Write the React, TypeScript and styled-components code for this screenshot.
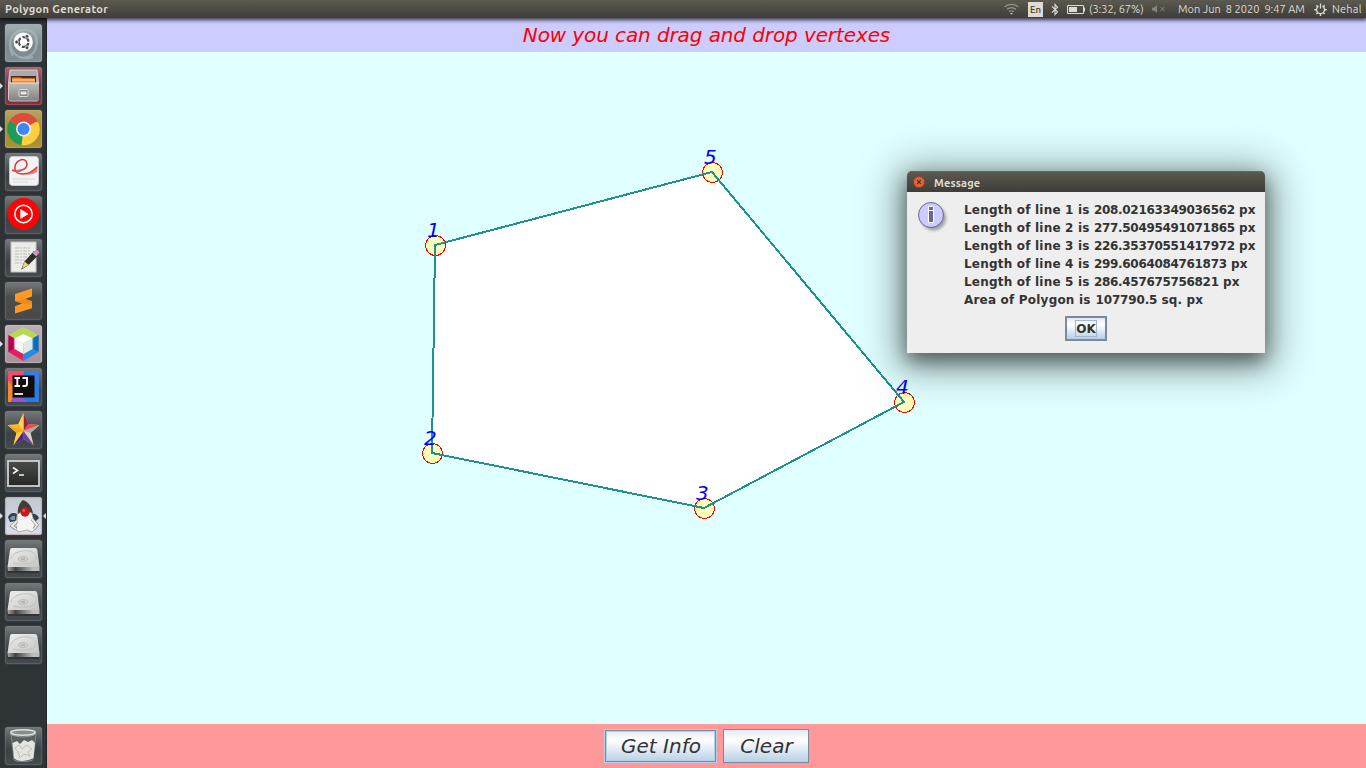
import React from 'react';
import styled, { createGlobalStyle, css } from 'styled-components';

const GlobalStyle = createGlobalStyle`
  * { box-sizing: border-box; }
  html, body { margin: 0; padding: 0; }
  body { width: 1366px; height: 768px; overflow: hidden; }
`;

const Desktop = styled.div`
  display: flex;
  flex-direction: column;
  width: 1366px;
  height: 768px;
  font-family: 'DejaVu Sans', sans-serif;
`;

const TopBar = styled.header`
  display: flex;
  align-items: center;
  justify-content: space-between;
  flex: none;
  height: 18px;
  padding: 0 4px 0 5px;
  background: linear-gradient(#5c5a50, #45443e 75%, #3f3e39);
  box-shadow: 0 1px 4px 1px rgba(0, 0, 0, 0.75);
  color: #dfdbd2;
  font-family: Ubuntu, 'Noto Sans', sans-serif;
  font-size: 11px;
  position: relative;
  z-index: 2;
`;

const AppTitle = styled.span`
  font-weight: 700;
  letter-spacing: 0.34px;
  line-height: 18px;
`;

const Indicators = styled.div`
  display: flex;
  align-items: center;
  height: 18px;
`;

const Indicator = styled.span<{ $width: number; $gap?: number; $spacing?: number }>`
  display: flex;
  flex: none;
  align-items: center;
  width: ${(p) => p.$width}px;
  margin-right: ${(p) => p.$gap ?? 0}px;
  letter-spacing: ${(p) => p.$spacing ?? 0}px;
  line-height: 18px;
  white-space: pre;
`;

const Language = styled.span`
  width: 15px;
  height: 15px;
  margin-right: 8px;
  background: #dfdbd2;
  color: #3c3b37;
  font-size: 9.5px;
  font-weight: 500;
  line-height: 16px;
  text-align: center;
`;

const Workspace = styled.div`
  display: flex;
  flex: 1;
  min-height: 0;
`;

const Launcher = styled.nav`
  display: flex;
  flex-direction: column;
  justify-content: space-between;
  width: 47px;
  padding: 6px 0 3px;
  background: #2e3436;
  border-right: 1px solid #202527;
`;

const LauncherGroup = styled.div`
  display: flex;
  flex-direction: column;
  gap: 5px;
`;

const LauncherRow = styled.div`
  display: flex;
  align-items: center;
  height: 38px;
`;

const Marker = styled.span<{ $side: 'left' | 'right'; $on?: boolean }>`
  width: 0;
  height: 0;
  border: 3px solid transparent;
  ${(p) =>
    p.$side === 'left'
      ? css`
          border-left-color: ${p.$on ? '#dcdcdc' : 'transparent'};
          border-right-width: 0;
          margin-right: 2px;
        `
      : css`
          border-right-color: ${p.$on ? '#dcdcdc' : 'transparent'};
          border-left-width: 0;
          margin-left: 1px;
        `}
`;

const Tile = styled.div<{ $bg: string; $edge: string }>`
  width: 37px;
  height: 38px;
  border-radius: 3px;
  background: ${(p) => p.$bg};
  box-shadow: inset 0 0 1px 1px ${(p) => p.$edge}, 0 0 1px 1px rgba(80, 88, 92, 0.3);
  svg { display: block; }
`;

const AppWindow = styled.main`
  display: flex;
  flex: 1;
  flex-direction: column;
`;

const Notice = styled.div`
  height: 34px;
  background: #ccccff;
  color: #ff0000;
  font-size: 20px;
  font-style: italic;
  letter-spacing: -0.1px;
  line-height: 34px;
  text-align: center;
`;

const Drawing = styled.svg`
  display: block;
  flex: none;
  width: 1319px;
  height: 672px;
  background: #e0ffff;
`;

const ActionBar = styled.footer`
  display: flex;
  align-items: center;
  justify-content: center;
  gap: 6px;
  height: 44px;
  background: #ff9999;
`;

const metalFill = 'linear-gradient(#dfe9f2, #ffffff 30%, #fbfcfe 36%, #b8cfe5)';

const ActionButton = styled.button<{ $width: number; $active?: boolean }>`
  width: ${(p) => p.$width}px;
  height: 34px;
  padding: 0 0 0 1px;
  border: 1px solid ${(p) => (p.$active ? '#b8cfe5' : '#7a8a99')};
  border-radius: 0;
  background: ${metalFill};
  box-shadow: ${(p) => (p.$active ? 'inset 0 0 0 1px #7a8a99, inset 0 0 0 2px #b8cfe5' : 'none')};
  color: #333333;
  font: italic 20px/32px 'DejaVu Sans', sans-serif;
`;

const Dialog = styled.section`
  position: absolute;
  left: 907px;
  top: 171px;
  width: 358px;
  height: 182px;
  border-radius: 5px 5px 0 0;
  background: #eeeeee;
  box-shadow: 0 8px 20px 0 rgba(0, 0, 0, 0.5), 0 6px 42px 10px rgba(0, 0, 0, 0.36);
  z-index: 3;
`;

const DialogTitle = styled.div`
  display: flex;
  align-items: center;
  height: 21px;
  padding-left: 6px;
  gap: 9px;
  border-radius: 5px 5px 0 0;
  background: linear-gradient(#5c5a50, #3e3d38);
  box-shadow: inset 0 1px 0 #69675d;
  color: #dfdbd2;
  font: 700 11px/21px Ubuntu, 'Noto Sans', sans-serif;
  letter-spacing: 0.15px;
  svg { flex: none; }
`;

const DialogName = styled.span`
  padding-top: 3px;
`;

const DialogBody = styled.div`
  display: flex;
  padding: 8px 0 0 9px;
  svg { flex: none; margin-right: 14px; }
`;

const MessageLines = styled.div`
  padding-top: 1px;
  color: #333333;
  font: 700 12px/18px 'DejaVu Sans', sans-serif;
`;

const MessageLine = styled.div`
  display: flex;
  height: 18px;
  white-space: pre;
`;

const Caption = styled.span<{ $width: number; $spacing: number }>`
  width: ${(p) => p.$width}px;
  letter-spacing: ${(p) => p.$spacing}px;
`;

const Measure = styled.span<{ $spacing: number }>`
  letter-spacing: ${(p) => p.$spacing}px;
`;

const DialogActions = styled.div`
  display: flex;
  justify-content: center;
  padding-top: 7px;
`;

const OkButton = styled.button`
  display: flex;
  align-items: center;
  justify-content: center;
  width: 42px;
  height: 25px;
  padding: 0;
  border: 2px solid #7a8a99;
  border-radius: 0;
  background: ${metalFill};
  color: #333333;
  font: 700 12px/17px 'DejaVu Sans', sans-serif;
`;

const FocusBox = styled.span`
  width: 22px;
  height: 17px;
  border: 1px solid #a3b8cc;
  text-align: center;
`;

const vertices = [
  { x: 435, y: 245 },
  { x: 432, y: 453 },
  { x: 704, y: 508 },
  { x: 904, y: 402 },
  { x: 712, y: 172 },
];

const outline = vertices.map((v) => `${v.x},${v.y}`).join(' ');

const measurements = [
  ['Length of line 1 is ', '208.02163349036562', ' px'],
  ['Length of line 2 is ', '277.50495491071865', ' px'],
  ['Length of line 3 is ', '226.35370551417972', ' px'],
  ['Length of line 4 is ', '299.6064084761873', ' px'],
  ['Length of line 5 is ', '286.457675756821', ' px'],
  ['Area of Polygon is ', '107790.5', ' sq. px'],
];

const Glyph = ({ children }: { children: React.ReactNode }) => (
  <svg width="37" height="38" viewBox="0 0 37 38">{children}</svg>
);

const DashIcon = () => (
  <Glyph>
    <g fill="none" stroke="#b5c2c6" strokeWidth="2" opacity=".55">
      <path d="M8 32C0 18 8 6 20 6c10 0 15 9 10 19" />
      <path d="M28 33C12 38 3 26 6 14" />
      <path d="M14 33c12 3 20-7 17-19" />
    </g>
    <circle cx="18.2" cy="18" r="9.6" fill="#fff" />
    <circle cx="18.6" cy="18" r="4.9" fill="none" stroke="#474d4f" strokeWidth="2.3" strokeDasharray="8.2 2" strokeDashoffset="-1" />
    <g fill="#474d4f" stroke="#fff" strokeWidth=".7">
      <circle cx="11.7" cy="18" r="1.9" /><circle cx="22" cy="12.3" r="1.9" /><circle cx="22" cy="23.7" r="1.9" />
    </g>
  </Glyph>
);

const FilesIcon = () => (
  <Glyph>
    <defs><linearGradient id="cab" x2="0" y2="1"><stop stopColor="#bcbcba" /><stop offset="1" stopColor="#838383" /></linearGradient></defs>
    <path d="M5 3h27l1.5 12v17q0 2-2 2h-26q-2 0-2-2V15z" fill="#aaaaa7" stroke="#dfdddc" strokeWidth=".8" />
    <path d="M6 9h25v7H6z" fill="#4b2b20" />
    <path d="M7 10.5h9l1 .7h13V16H7z" fill="#f48934" /><path d="M7 13h23" stroke="#ffd0a0" />
    <rect x="4" y="16" width="30" height="17.5" rx="1" fill="url(#cab)" />
    <path d="M4 16h30" stroke="#e3e3e1" />
    <rect x="14" y="22.5" width="9" height="7" rx="1" fill="#888" stroke="#d8d8d8" />
    <path d="M16 27v-2h5v2z" fill="#ddd" stroke="#fff" strokeWidth=".7" />
  </Glyph>
);

const ChromeIcon = () => (
  <Glyph>
    <path d="M18.5 19 4.6 11A16 16 0 0 1 32.4 11z" fill="#dc4b3e" />
    <path d="M18.5 19V35A16 16 0 0 1 4.6 11z" fill="#199d58" />
    <path d="M18.5 19 32.4 11A16 16 0 0 1 16.5 35z" fill="#ffcf3f" />
    <path d="M18.5 11.6H32.7" stroke="#dc4b3e" />
    <circle cx="18.5" cy="19" r="7.5" fill="#eef2f4" />
    <circle cx="18.5" cy="19" r="6" fill="#4285f4" />
  </Glyph>
);

const DocumentIcon = () => (
  <Glyph>
    <rect x="4.5" y="3.5" width="29" height="29" rx="3" fill="#f3f3f3" stroke="#c9c9c9" />
    <path d="M7 17c7 3 18-1 14-9-4-4-12 1-11 8 0 6 13 8 22-2" fill="none" stroke="#d73839" strokeWidth="1.5" />
    <path d="M7 18q8 3 14-3M19 21q8-1 14-8l-1 6q-6 4-13 2" fill="#e05b5d" opacity=".75" />
    <path d="M8 26h22M8 29h15" stroke="#d5d5d5" />
  </Glyph>
);

const MusicIcon = () => (
  <Glyph>
    <circle cx="18.5" cy="18" r="16" fill="#f90505" />
    <circle cx="18.5" cy="18" r="8.7" fill="none" stroke="#fff" strokeWidth="1.5" />
    <path d="m15.3 13 8.3 5-8.3 5z" fill="#fff" />
  </Glyph>
);

const EditorIcon = () => (
  <Glyph>
    <rect x="6" y="3" width="25" height="30" fill="#ecece8" stroke="#c4c4c0" />
    <path d="M10 9h16M10 12h15M10 15h16M10 18h12M10 21h10M10 24h7" stroke="#bdbdb9" strokeDasharray="4 1 2 1" />
    <path d="M17.5 29 20 23 29 13l3.3 3.2-10 10z" fill="#302f29" stroke="#302f29" strokeWidth="1.4" />
    <path d="m17 29.5 2.6-7 4.2 3.6z" fill="#e7d873" />
    <path d="m28 13.5 3.7 3.3 2.5-2.8q0-3-3-3z" fill="#cf8bbf" />
    <path d="m28 13.5 3.7 3.3" stroke="#bbb" strokeWidth="1.3" />
  </Glyph>
);

const SublimeIcon = () => (
  <Glyph>
    <path d="M27 6.5v8L20 17l7 2.3v7L10 31.5v-7.3l7-2.6-7-2.6v-7z" fill="#ff9825" />
    <path d="m10 19 10-2 7 2.3v3.2l-10-.9z" fill="#ec8a1e" />
  </Glyph>
);

const CubeIcon = () => (
  <Glyph>
    <path d="m18.5 2 15 8-7 4-8-4-8 4-7-4z" fill="#b7d958" />
    <path d="m3.5 10 6.5 4v10l8.5 5v7L3.5 27z" fill="#e51f64" />
    <path d="m33.5 10-6.5 4v10l-8.5 5v7l15-9z" fill="#268ce0" />
    <path d="m3.5 10 5 3v11l-5 3z" fill="#ae064c" /><path d="m33.5 10-5 3v11l5 3z" fill="#136bb3" />
    <path d="m18.5 9 9 4.5-9 5-9-5z" fill="#fff" />
    <path d="M9.5 13.5v10.5l9 5V18.5z" fill="#f5f7f3" /><path d="M27.5 13.5v10.5l-9 5V18.5z" fill="#dfe9e6" />
  </Glyph>
);

const IdeIcon = () => (
  <Glyph>
    <rect x="3" y="3" width="31" height="31" fill="#287bdf" />
    <path d="M3 3h17l-8 17-9 8z" fill="#f64c6c" /><path d="m3 13 8 8-5 13H3z" fill="#f58a2a" />
    <path d="m11 23 11 11H6z" fill="#9455d3" /><path d="m20 3 14 14V3z" fill="#367bea" />
    <rect x="7.5" y="7.5" width="22" height="22" fill="#100c0e" />
    <path d="M9.5 10h5.5m-2.7 0v8m-2.8 0h5.5M17.5 10h4.5v6q0 2-2 2h-2.5" fill="none" stroke="#fff" strokeWidth="1.9" />
    <path d="M9.5 26h8.5" stroke="#fff" strokeWidth="1.7" />
  </Glyph>
);

const StarIcon = () => (
  <Glyph>
    <path d="m18.5 2 5 11 11 1-9 8 3 12-10-6-10 6 3-12-9-8 11-1z" fill="#f8ba29" />
    <path d="m18.5 2 5 11-5 7z" fill="#9b243d" /><path d="m23.5 13 11 1-16 6z" fill="#e5486b" />
    <path d="m34.5 14-9 8-7-2z" fill="#aaa" /><path d="m25.5 22 3 12-10-14z" fill="#d0d0d0" />
    <path d="m28.5 34-10-6v-8z" fill="#6743a5" /><path d="m18.5 28-10 6 10-14z" fill="#4a2199" />
    <path d="m18.5 20-7 2-3 12z" fill="#ffce38" /><path d="m18.5 20-16-6 9 8z" fill="#eda822" />
    <path d="m18.5 2-5 11 5 7z" fill="#ffd45d" />
  </Glyph>
);

const TerminalIcon = () => (
  <Glyph>
    <defs><linearGradient id="term" x2="0" y2="1"><stop stopColor="#4b4c49" /><stop offset="1" stopColor="#252724" /></linearGradient></defs>
    <rect x="3" y="7" width="31" height="25" fill="url(#term)" stroke="#d0d0cf" strokeWidth="1.8" />
    <path d="m8 13.5 4.5 3-4.5 3M14 21h5" fill="none" stroke="#f0f0ef" strokeWidth="1.6" />
  </Glyph>
);

const DukeIcon = () => (
  <Glyph>
    <path d="M3 20q3-6 9-3l-1 7-6 1zM24 17q7-2 10 4l-4 4-6-3z" fill="#32414a" />
    <path d="M5 21q3-3 5-2v4H6z" fill="#779aaa" />
    <path d="M18 3q8 4 9 14l4 14-4 4-5-2-9 2q-3-3-1-11 0-14 6-21z" fill="#f4f4f1" stroke="#777" strokeWidth=".5" />
    <path d="M18 3q8 3 10 13l-5-1q-5-3-10 2-1-9 5-14z" fill="#3f3f3f" />
    <circle cx="20" cy="15" r="4.7" fill="#c9191d" /><circle cx="18.8" cy="13.6" r="1.5" fill="#ee5555" />
    <path d="m12 24-5 5 4 3M27 22l5 6-3 4" fill="none" stroke="#777" strokeWidth="3" />
    <path d="m12 24-5 5 4 3M27 22l5 6-3 4" fill="none" stroke="#ededeb" strokeWidth="2" />
  </Glyph>
);

const DiskIcon = () => (
  <Glyph>
    <defs>
      <linearGradient id="plate" x2="1" y2="1"><stop stopColor="#efefee" /><stop offset="1" stopColor="#c4c4c2" /></linearGradient>
      <linearGradient id="front"><stop stopColor="#aaa" /><stop offset=".25" stopColor="#444" /><stop offset=".8" stopColor="#bdbdbd" /></linearGradient>
    </defs>
    <path d="M2 27h32v6H3z" fill="#222" opacity=".5" />
    <path d="M7 8h23q2 0 2.3 2L34.5 27H2.5L5 10q.2-2 2-2z" fill="url(#plate)" />
    <path d="M2.5 27h32v4H3z" fill="url(#front)" />
    <path d="M6 19C7 10 30 7 31 17c1 8-16 8-23 6" fill="none" stroke="#c0c0be" />
    <ellipse cx="18" cy="19" rx="4.5" ry="2.3" fill="#d3d3d1" stroke="#b0b0ae" strokeWidth=".8" /><path d="M16 19h4" stroke="#999" />
  </Glyph>
);

const TrashIcon = () => (
  <Glyph>
    <path d="m6 7 3 25.5q0 2 9 2t10-2L31 7z" fill="#596162" stroke="#8c9391" strokeWidth=".8" />
    <path d="m9 31-1.5-15L12 14l3 3 4-4 4 2 4-2 3 3-1.5 15q-5 3-11 3T9 31z" fill="#e3e4df" />
    <path d="m10 21 4-3 3 4 5-4 5 4-4 3 2 4-6-2-4 4-2-6z" stroke="#bcbfba" fill="none" />
    <ellipse cx="18" cy="5.5" rx="12.3" ry="2.7" fill="#858e8d" stroke="#dde1df" strokeWidth="1.6" />
    <path d="M7 8q11 4 22 0" fill="none" stroke="#a4abaa" strokeWidth=".8" />
  </Glyph>
);

const darkTile = 'linear-gradient(#74797c, #505558 35%, #3b4144 60%, #444a4d)';
const darkEdge = 'rgba(125,132,135,.4)';

interface LaunchItem {
  icon: React.ReactNode;
  bg?: string;
  edge?: string;
  running?: boolean;
  focused?: boolean;
}

const launchers: LaunchItem[] = [
  { icon: <DashIcon />, bg: 'linear-gradient(#a5b0b3, #7b898e 60%, #819096)', edge: 'rgba(165,175,179,.6)' },
  { icon: <FilesIcon />, bg: 'linear-gradient(#ad6976, #7b2f3e 45%, #812f40)', edge: 'rgba(179,103,116,.6)', running: true },
  { icon: <ChromeIcon />, bg: 'linear-gradient(#b8a76b, #a58a30 45%, #ac9336)', edge: 'rgba(194,173,93,.6)', running: true },
  { icon: <DocumentIcon /> },
  { icon: <MusicIcon /> },
  { icon: <EditorIcon /> },
  { icon: <SublimeIcon />, bg: 'linear-gradient(#77797b, #4c4c4c 40%, #494949)' },
  { icon: <CubeIcon />, bg: 'linear-gradient(#bdb0b5, #a79198)', edge: 'rgba(212,194,201,.6)', running: true },
  { icon: <IdeIcon /> },
  { icon: <StarIcon /> },
  { icon: <TerminalIcon /> },
  { icon: <DukeIcon />, bg: 'linear-gradient(#c2c6cf, #d8dfed)', edge: '#c9a9ad', running: true, focused: true },
  { icon: <DiskIcon /> },
  { icon: <DiskIcon /> },
  { icon: <DiskIcon /> },
];

const LaunchButton = ({ icon, bg = darkTile, edge = darkEdge, running, focused }: LaunchItem) => (
  <LauncherRow>
    <Marker $side="left" $on={running} />
    <Tile $bg={bg} $edge={edge}>{icon}</Tile>
    <Marker $side="right" $on={focused} />
  </LauncherRow>
);

const StatusArea = () => (
  <Indicators>
    <Indicator $width={15} $gap={9}>
      <svg width="15" height="12" viewBox="0 0 15 12" fill="none" stroke="#99978f" strokeWidth="1.2">
        <path d="M.7 3.8q6.8-5 13.6 0M3 6.3q4.5-3.3 9 0M5 8.6q2.5-1.7 5 0" /><path d="m6 10 1.5 1.5L9 10z" fill="#dfdbd2" stroke="none" />
      </svg>
    </Indicator>
    <Language>En</Language>
    <Indicator $width={8} $gap={8}>
      <svg width="8" height="13" viewBox="0 0 8 13" fill="none" stroke="#dfdbd2" strokeWidth="1.1"><path d="m1 3.5 5.5 5.2L4 11.5v-10l2.5 2.7L1 9.5" /></svg>
    </Indicator>
    <Indicator $width={19} $gap={3}>
      <svg width="19" height="9" viewBox="0 0 19 9"><path d="M.5.5h16v8H.5zM17.5 2.5v4" fill="none" stroke="#dfdbd2" /><path d="M2 2h8v5H2z" fill="#dfdbd2" /></svg>
    </Indicator>
    <Indicator $width={54} $gap={9} $spacing={-0.05}>(3:32, 67%)</Indicator>
    <Indicator $width={14} $gap={12}>
      <svg width="14" height="10" viewBox="0 0 14 10"><path d="M0 3.5h2L5 1v8L2 6.5H0z" fill="#85837c" /><path d="m8.5 3 4 4m0-4-4 4" stroke="#85837c" /></svg>
    </Indicator>
    <Indicator $width={127} $gap={9}>Mon Jun  8 2020  9:47 AM</Indicator>
    <Indicator $width={13} $gap={5}>
      <svg width="13" height="13" viewBox="0 0 13 13" fill="none" stroke="#dfdbd2">
        <path d="M4.5 3.1a4 4 0 1 0 4 0" strokeWidth="1.3" /><path d="M6.5 .5v5" strokeWidth="1.3" />
        <path d="m2.3 2.3 1.2 1.2m7.2-1.2L9.5 3.5M.3 6.8h2.2m8 0h2.2M2.3 11l1.4-1.3m7 1.3-1.4-1.3M6.5 11v2" strokeWidth="1.5" />
      </svg>
    </Indicator>
    <Indicator $width={30} $spacing={0.2}>Nehal</Indicator>
  </Indicators>
);

const PolygonCanvas = () => (
  <Drawing viewBox="47 52 1319 672">
    <g shapeRendering="crispEdges">
      <polygon points={outline} fill="#ffffff" />
      {vertices.map((v) => (
        <circle key={v.x} cx={v.x + 0.5} cy={v.y + 0.5} r="10" fill="#ffffb9" stroke="#ff0000" />
      ))}
      <polygon points={outline} fill="none" stroke="#209090" strokeWidth="2" />
    </g>
    <g fill="#0000ff" fontFamily="'DejaVu Sans', sans-serif" fontSize="20" fontStyle="italic">
      {vertices.map((v, i) => (
        <text key={v.x} x={v.x - 8} y={v.y - 8.5}>{i + 1}</text>
      ))}
    </g>
  </Drawing>
);

const MessageDialog = () => (
  <Dialog>
    <DialogTitle>
      <svg width="12" height="12" viewBox="0 0 12 12">
        <circle cx="6" cy="6" r="5.5" fill="#e95f34" stroke="#923e24" strokeWidth=".6" />
        <path d="m4.2 4.2 3.6 3.6m0-3.6L4.2 7.8" stroke="#3f2c24" strokeWidth="1.1" />
      </svg>
      <DialogName>Message</DialogName>
    </DialogTitle>
    <DialogBody>
      <svg width="34" height="34" viewBox="0 0 34 34">
        <defs><filter id="soft"><feGaussianBlur stdDeviation="1.5" /></filter></defs>
        <circle cx="17.5" cy="18" r="12.5" fill="#777" opacity=".65" filter="url(#soft)" />
        <circle cx="15" cy="15" r="12.5" fill="#ccccff" stroke="#666699" />
        <path d="M12.5 6.5h5v4h-5zM12.5 10.5h5v12h-5z" fill="#666699" stroke="#fff" />
      </svg>
      <MessageLines>
        {measurements.map(([caption, value, unit], i) => (
          <MessageLine key={caption}>
            <Caption $width={i === 5 ? 131.5 : 130} $spacing={0.2}>{caption}</Caption>
            <Measure $spacing={i === 5 ? -0.15 : -0.32}>{value}</Measure>
            <Measure $spacing={0.1}>{unit}</Measure>
          </MessageLine>
        ))}
      </MessageLines>
    </DialogBody>
    <DialogActions>
      <OkButton><FocusBox>OK</FocusBox></OkButton>
    </DialogActions>
  </Dialog>
);

export default function App() {
  return (
    <>
      <GlobalStyle />
      <Desktop>
        <TopBar>
          <AppTitle>Polygon Generator</AppTitle>
          <StatusArea />
        </TopBar>
        <Workspace>
          <Launcher>
            <LauncherGroup>
              {launchers.map((item, i) => <LaunchButton key={i} {...item} />)}
            </LauncherGroup>
            <LaunchButton icon={<TrashIcon />} />
          </Launcher>
          <AppWindow>
            <Notice>Now you can drag and drop vertexes</Notice>
            <PolygonCanvas />
            <ActionBar>
              <ActionButton $width={113} $active>Get Info</ActionButton>
              <ActionButton $width={86}>Clear</ActionButton>
            </ActionBar>
          </AppWindow>
        </Workspace>
      </Desktop>
      <MessageDialog />
    </>
  );
}
